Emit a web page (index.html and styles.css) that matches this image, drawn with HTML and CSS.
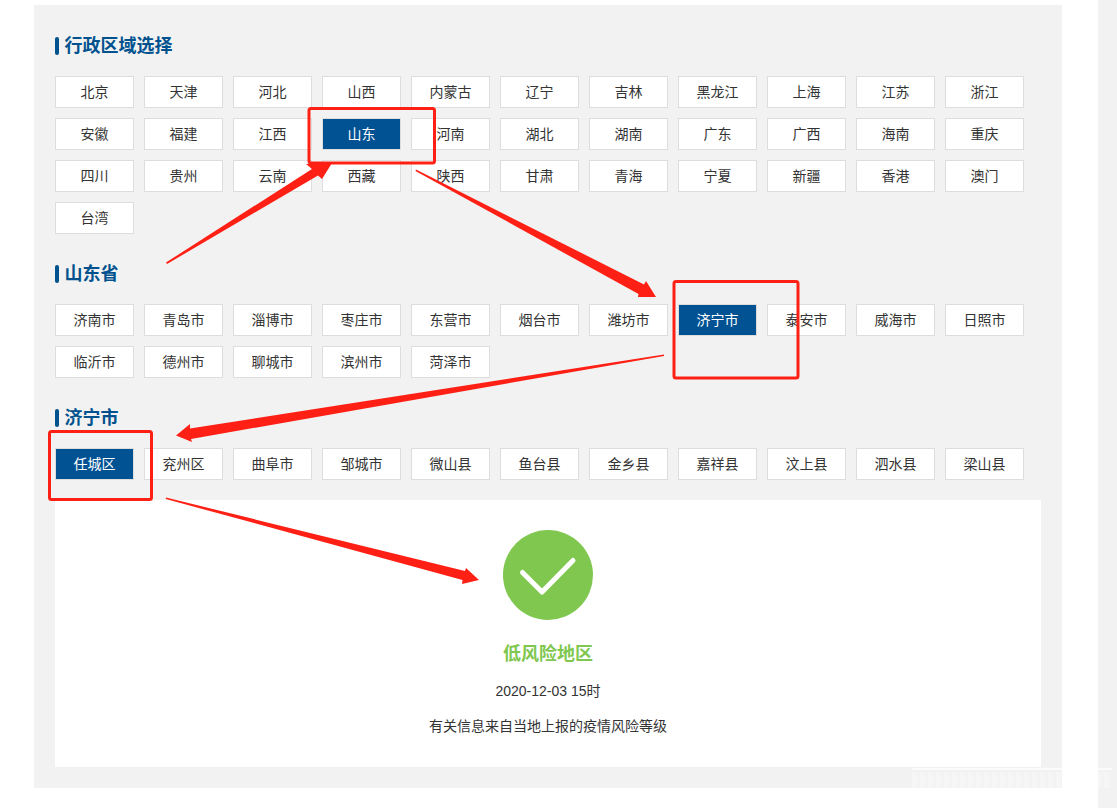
FILE: index.html
```html
<!DOCTYPE html>
<html lang="zh-CN">
<head>
<meta charset="utf-8">
<title>疫情风险等级查询</title>
<link rel="stylesheet" href="styles.css">
</head>
<body>
<div class="page">
  <main class="panel">
    <section class="section">
      <h2 class="title">行政区域选择</h2>
      <ul class="grid">
        <li class="item">北京</li><li class="item">天津</li><li class="item">河北</li><li class="item">山西</li><li class="item">内蒙古</li><li class="item">辽宁</li><li class="item">吉林</li><li class="item">黑龙江</li><li class="item">上海</li><li class="item">江苏</li><li class="item">浙江</li>
        <li class="item">安徽</li><li class="item">福建</li><li class="item">江西</li><li class="item active">山东</li><li class="item">河南</li><li class="item">湖北</li><li class="item">湖南</li><li class="item">广东</li><li class="item">广西</li><li class="item">海南</li><li class="item">重庆</li>
        <li class="item">四川</li><li class="item">贵州</li><li class="item">云南</li><li class="item">西藏</li><li class="item">陕西</li><li class="item">甘肃</li><li class="item">青海</li><li class="item">宁夏</li><li class="item">新疆</li><li class="item">香港</li><li class="item">澳门</li>
        <li class="item">台湾</li>
      </ul>
    </section>
    <section class="section">
      <h2 class="title">山东省</h2>
      <ul class="grid">
        <li class="item">济南市</li><li class="item">青岛市</li><li class="item">淄博市</li><li class="item">枣庄市</li><li class="item">东营市</li><li class="item">烟台市</li><li class="item">潍坊市</li><li class="item active">济宁市</li><li class="item">泰安市</li><li class="item">威海市</li><li class="item">日照市</li>
        <li class="item">临沂市</li><li class="item">德州市</li><li class="item">聊城市</li><li class="item">滨州市</li><li class="item">菏泽市</li>
      </ul>
    </section>
    <section class="section">
      <h2 class="title">济宁市</h2>
      <ul class="grid">
        <li class="item active">任城区</li><li class="item">兖州区</li><li class="item">曲阜市</li><li class="item">邹城市</li><li class="item">微山县</li><li class="item">鱼台县</li><li class="item">金乡县</li><li class="item">嘉祥县</li><li class="item">汶上县</li><li class="item">泗水县</li><li class="item">梁山县</li>
      </ul>
    </section>
    <section class="result">
      <svg class="badge" viewBox="0 0 90 90" width="90" height="90" aria-hidden="true">
        <circle cx="45" cy="45" r="45" fill="#80c750"/>
        <path d="M19.500 42.500 L39 62 L70 30.500" fill="none" stroke="#fff" stroke-width="5" stroke-linecap="round" stroke-linejoin="round"/>
      </svg>
      <h3 class="level">低风险地区</h3>
      <p class="stamp">2020-12-03 15时</p>
      <p class="note">有关信息来自当地上报的疫情风险等级</p>
    </section>
  </main>
  <div class="strip"></div>
</div>
<svg class="marks" width="1117" height="808" viewBox="0 0 1117 808" aria-hidden="true">
  <g fill="none" stroke="#ff2015" stroke-width="3" stroke-linejoin="round">
    <rect x="309" y="108.500" width="125.500" height="54.500" rx="2"/>
    <rect x="674" y="281.500" width="124" height="96.500" rx="2"/>
    <rect x="49.500" y="431.500" width="102" height="68" rx="2"/>
  </g>
  <g fill="#ff2015">
    <polygon points="166,262.500 312,169 306,164 332,163 322,179 318,175.500 167,264"/>
    <polygon points="416,169.500 644,284.500 646,281 656,297 638,297 638.500,294 415.500,171"/>
    <polygon points="664,354.500 190,428.500 190,424 176,435.500 192,442 191,439 664,356"/>
    <polygon points="166,497.500 465,571 466,568 479,580 462,584 462.500,580 165.800,499"/>
  </g>
</svg>
<div class="wm-line"></div>
<div class="wm-text"></div>
</body>
</html>
```
FILE: styles.css
```css
* {
  box-sizing: border-box;
}

html,
body {
  margin: 0;
  padding: 0;
  background: #fff;
}

body {
  position: relative;
  height: 808px;
  overflow: hidden;
  font-family: "Liberation Sans", "Noto Sans CJK SC", sans-serif;
  font-size: 14px;
  color: #333;
}

.page {
  display: flex;
  align-items: stretch;
  height: 808px;
  padding-left: 34px;
}

.panel {
  width: 1028px;
  height: 783px;
  margin-top: 5px;
  padding: 32px 21px 21px;
  background: #f2f2f2;
}

.strip {
  width: 19px;
  margin-left: 36px;
  background: #f2f2f2;
}

.section + .section {
  margin-top: 31px;
}

.title {
  display: flex;
  align-items: center;
  gap: 5.500px;
  height: 18px;
  margin: 0 0 21px;
  font-size: 18px;
  font-weight: 700;
  line-height: 20px;
  color: #00528f;
}

.title::before {
  content: "";
  flex: none;
  width: 4px;
  height: 18px;
  border-radius: 2px;
  background: #00528f;
}

.grid {
  display: grid;
  grid-template-columns: repeat(11, 79px);
  gap: 10px;
  margin: 0;
  padding: 0;
  list-style: none;
}

.item {
  height: 32px;
  border: 1px solid #ddd;
  background: #fff;
  line-height: 30px;
  text-align: center;
  white-space: nowrap;
}

.item.active {
  background: #005293;
  color: #fff;
}

.result {
  display: flex;
  flex-direction: column;
  align-items: center;
  height: 267px;
  margin-top: 20px;
  padding-top: 30px;
  background: #fff;
}

.badge {
  display: block;
  flex: none;
}

.level {
  margin: 21px 0 0;
  font-size: 18px;
  font-weight: 700;
  line-height: 26px;
  color: #80c750;
}

.stamp {
  margin: 14px 0 0;
  line-height: 20px;
}

.note {
  margin: 15px 0 0;
  line-height: 20px;
}

.marks {
  position: absolute;
  left: 0;
  top: 0;
  pointer-events: none;
}

.wm-line {
  position: absolute;
  left: 912px;
  top: 768px;
  width: 200px;
  height: 2px;
  background: rgba(255, 255, 255, 0.7);
}

.wm-text {
  position: absolute;
  left: 912px;
  top: 772px;
  width: 200px;
  height: 16px;
  background: repeating-linear-gradient(90deg, rgba(255, 255, 255, 0.3) 0 5px, rgba(255, 255, 255, 0.1) 5px 8px);
}
```
